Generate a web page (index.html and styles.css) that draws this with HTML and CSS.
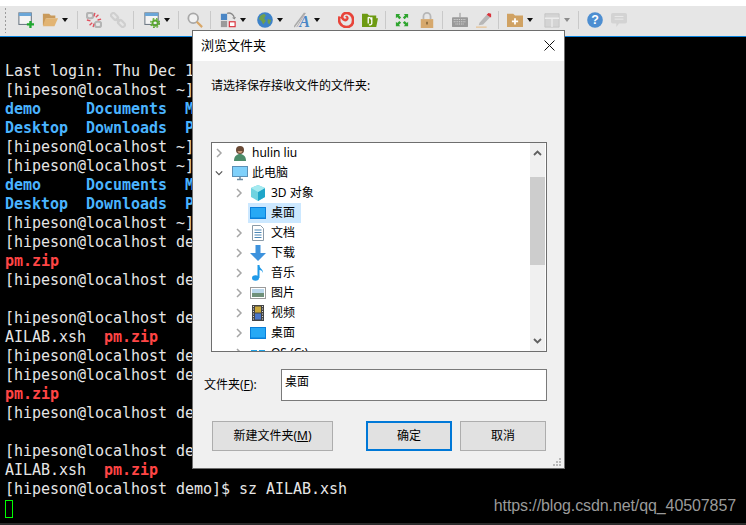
FILE: index.html
```html
<!DOCTYPE html>
<html lang="zh-CN">
<head>
<meta charset="utf-8">
<title>浏览文件夹</title>
<link rel="stylesheet" href="styles.css">
</head>
<body>
<div class="app">
  <div class="topgap"></div>
  <div class="toolbar">
    <div class="grip"></div>
    <div class="btn drop"><svg class="ic" viewBox="0 0 18 18"><rect x="1" y="1" width="14" height="13" fill="#f4f4f4" stroke="#6f7a86" stroke-width="1.200"/><rect x="1" y="1" width="14" height="3.500" fill="#6aa6d8"/><path d="M10 14h8M14 10v8" stroke="#1fa82f" stroke-width="2.600"/></svg></div>
    <div class="btn drop-arrow"><svg class="ic" viewBox="0 0 18 18"><path d="M1 2h7l2 2h5v3H5L2 15H1z" fill="#c99a5b"/><path d="M4 7h14l-4 9H1z" fill="#e2b473"/></svg><i class="caret"></i></div>
    <span class="sep sep-snug"></span>
    <div class="btn"><svg class="ic" viewBox="0 0 18 18"><g fill="none" stroke="#b4b4b4" stroke-width="2.400"><rect x="1" y="1" width="7" height="6" rx="2.400"/><rect x="10" y="11" width="7" height="6" rx="2.400"/></g><path d="M10 1l-1 4M14 3l-3 3M17 8l-4 1M1 9l4 1M4 15l3-3M8 17l1-4" stroke="#e0525f" stroke-width="1.500"/></svg></div>
    <div class="btn"><svg class="ic" viewBox="0 0 18 18"><g fill="none" stroke="#cfcfcf" stroke-width="2.400" transform="rotate(45 9 9)"><rect x="-1" y="6.500" width="9" height="5" rx="2.500"/><rect x="10" y="6.500" width="9" height="5" rx="2.500"/><path d="M6 9h6"/></g></svg></div>
    <span class="sep sep-wide"></span>
    <div class="btn drop-arrow"><svg class="ic" viewBox="0 0 18 18"><rect x="1" y="1" width="15" height="13" fill="#f4f4f4" stroke="#6f7a86" stroke-width="1.200"/><rect x="1" y="1" width="15" height="3.500" fill="#6aa6d8"/><circle cx="12.500" cy="12.500" r="3" fill="none" stroke="#5ba82f" stroke-width="2.200"/><circle cx="12.500" cy="12.500" r="5" fill="none" stroke="#5ba82f" stroke-width="1.500" stroke-dasharray="2 2"/></svg><i class="caret"></i></div>
    <span class="sep sep-tight"></span>
    <div class="btn"><svg class="ic" viewBox="0 0 18 18"><circle cx="7" cy="7" r="5.500" fill="#f2f2f2" stroke="#a8a8a8" stroke-width="2"/><path d="M11 11l6 6" stroke="#d9a768" stroke-width="2.500"/></svg></div>
    <span class="sep"></span>
    <div class="btn drop-arrow"><svg class="ic" viewBox="0 0 18 18"><rect x="1" y="2" width="7" height="7" fill="#4a86c5"/><rect x="1" y="10" width="7" height="7" fill="#9a9a9a"/><rect x="10.500" y="11" width="6.500" height="5.500" fill="#fff" stroke="#d9313a" stroke-width="1.300"/><path d="M8 1.500a6 6 0 0 1 8 5" fill="none" stroke="#8a8a8a" stroke-width="1.500"/><path d="M13.500 6.500l3 2 1.500-3z" fill="#8a8a8a"/></svg><i class="caret"></i></div>
    <div class="btn drop-arrow push"><svg class="ic" viewBox="0 0 18 18"><circle cx="9" cy="9" r="8.800" fill="#3d82c9"/><path d="M4 4l4-2 2 2-2 3 2 3-3 4-2-4-3-2zM12 8l4 1-2 5-2-2z" fill="#6f9f4d"/></svg><i class="caret"></i></div>
    <div class="btn drop-arrow push"><svg class="ic" viewBox="0 0 18 18"><path d="M0 17L12 1" stroke="#a9a9a9" stroke-width="1.800"/><path d="M3 17L13 1" stroke="#a9a9a9" stroke-width="1"/><text class="ic-a" x="6" y="17">A</text></svg><i class="caret"></i></div>
    <div class="btn push-lg"><svg class="ic" viewBox="0 0 18 18"><path d="M2 5c-2 5 0 11 7 12 5 0 8-3 8-8 0-5-4-8-7-8-4 0-6 3-5 6 1 2 4 3 5 1 1-1 0-3-1-2" fill="none" stroke="#e8443a" stroke-width="3"/></svg></div>
    <div class="btn"><svg class="ic" viewBox="0 0 18 18"><path d="M0 2h6l2 2h8v3h2l-2 10H0z" fill="#6d9a12"/><path d="M7 6v7M7 6c3 0 4 2 3 3M11 6v7c0 1-2 2-3 1" fill="none" stroke="#fff" stroke-width="1.500"/></svg></div>
    <span class="sep"></span>
    <div class="btn"><svg class="ic ic-small" viewBox="0 0 16 16"><g fill="#2fa52f"><path d="M1 1h5L4.500 2.500 7 5 5 7 2.500 4.500 1 6zM15 1v5l-1.500-1.500L11 7 9 5l2.500-2.500L10 1zM1 15v-5l1.500 1.500L5 9l2 2-2.500 2.500L6 15zM15 15h-5l1.500-1.500L9 11l2-2 2.500 2.500L15 10z"/></g></svg></div>
    <div class="btn"><svg class="ic" viewBox="0 0 18 18"><path d="M5 8V5a4 4 0 0 1 8 0v3" fill="none" stroke="#b7b7b7" stroke-width="2"/><rect x="2" y="8" width="14" height="10" fill="#d6a86c"/><rect x="8" y="11" width="2" height="3" fill="#8a6a3c"/></svg></div>
    <span class="sep"></span>
    <div class="btn"><svg class="ic" viewBox="0 0 18 18"><path d="M9 1v5" stroke="#8a8a8a"/><rect x="0" y="6" width="18" height="11" rx="1" fill="#999"/><path d="M2 8.500h14M2 11h14M4 13.500h10" stroke="#e6e6e6" stroke-width="1" stroke-dasharray="1 1"/></svg></div>
    <div class="btn"><svg class="ic" viewBox="0 0 18 18"><path d="M0 17h12" stroke="#e8bd85" stroke-width="1.200"/><path d="M4 12L12 3l4 3-8 8-5 1z" fill="#b7b7b7"/><path d="M12 3l2-2 3 1 0 4-1 0z" fill="#d9313a"/></svg></div>
    <span class="sep sep-tight"></span>
    <div class="btn drop-arrow"><svg class="ic" viewBox="0 0 18 18"><path d="M0 2h7l2 2h9v13H0z" fill="#d0a263"/><path d="M9 7v7M5.500 10.500h7" stroke="#fff" stroke-width="2"/></svg><i class="caret"></i></div>
    <div class="btn drop-arrow push"><svg class="ic" viewBox="0 0 18 18"><path d="M1 2h16v15H1z" fill="#d4d4d4" stroke="#c4c4c4"/><path d="M1 7h16M9 7v10" stroke="#ececec" stroke-width="1.500"/></svg><i class="caret caret-off"></i></div>
    <span class="sep sep-tight"></span>
    <div class="btn"><svg class="ic" viewBox="0 0 18 18"><circle cx="9" cy="9" r="8.800" fill="#4d8ed1"/><text class="ic-q" x="9" y="14">?</text></svg></div>
    <div class="btn"><svg class="ic" viewBox="0 0 18 18"><path d="M2 1h14a2 2 0 0 1 2 2v8a2 2 0 0 1-2 2H9l-3 4v-4H2a2 2 0 0 1-2-2V3a2 2 0 0 1 2-2z" fill="#d3d3d3"/><path d="M4 5h10M4 8h10" stroke="#ececec"/></svg></div>
  </div>
  <div class="accent"></div>
  <pre class="terminal">Last login: Thu Dec 1
[hipeson@localhost ~]
<b class="dir">demo     Documents  M</b>
<b class="dir">Desktop  Downloads  P</b>
[hipeson@localhost ~]
[hipeson@localhost ~]
<b class="dir">demo     Documents  M</b>
<b class="dir">Desktop  Downloads  P</b>
[hipeson@localhost ~]
[hipeson@localhost de
<b class="zip">pm.zip</b>
[hipeson@localhost de

[hipeson@localhost de
AILAB.xsh  <b class="zip">pm.zip</b>
[hipeson@localhost de
[hipeson@localhost de
<b class="zip">pm.zip</b>
[hipeson@localhost de

[hipeson@localhost de
AILAB.xsh  <b class="zip">pm.zip</b>
[hipeson@localhost demo]$ sz AILAB.xsh
<span class="cursor"></span></pre>
  <div class="watermark">https://blog.csdn.net/qq_40507857</div>

  <section class="dialog">
    <header class="titlebar">
      <span>浏览文件夹</span>
      <svg class="close" viewBox="0 0 11 11"><path d="M.5.5l10 10M10.500.5l-10 10" stroke="#111" stroke-width="1"/></svg>
    </header>
    <div class="content">
      <p class="prompt">请选择保存接收文件的文件夹:</p>
      <div class="tree">
        <ul class="rows">
          <li class="row"><svg class="chev" viewBox="0 0 8 10"><path d="M2 1l4 4-4 4" fill="none" stroke="#a6a6a6" stroke-width="1.500"/></svg><svg class="ti" viewBox="0 0 16 16"><circle cx="8" cy="5" r="4" fill="#6a4a36"/><path d="M5.500 6c1 3 4 3 5 0z" fill="#c79a7a"/><path d="M2 16c0-5 3-7 6-7s6 2 6 7z" fill="#4c8c6a"/></svg><span>hulin liu</span></li>
          <li class="row"><svg class="chev" viewBox="0 0 10 8"><path d="M1 2l4 4 4-4" fill="none" stroke="#555" stroke-width="1.500"/></svg><svg class="ti" viewBox="0 0 16 16"><rect x=".5" y="1.500" width="15" height="10" fill="#7fd0fa" stroke="#5b8fb5"/><path d="M5 14.500h6M8 11.500v3" stroke="#6c8aa0" stroke-width="1.500"/></svg><span>此电脑</span></li>
          <li class="row child"><svg class="chev" viewBox="0 0 8 10"><path d="M2 1l4 4-4 4" fill="none" stroke="#a6a6a6" stroke-width="1.500"/></svg><svg class="ti" viewBox="0 0 16 16"><path d="M8 0l7 3v9l-7 4-7-4V3z" fill="#6fd3e0"/><path d="M8 7l7-4v9l-7 4z" fill="#1fa6c9"/><path d="M8 7L1 3l7-3 7 3z" fill="#a5eaf0"/></svg><span>3D 对象</span></li>
          <li class="row child selected"><span class="chev-space"></span><svg class="ti" viewBox="0 0 16 16"><rect x="0" y="2" width="16" height="12" fill="#0a7fd9"/><rect x="1" y="3" width="14" height="9.500" fill="#27a9f5"/></svg><span>桌面</span></li>
          <li class="row child"><svg class="chev" viewBox="0 0 8 10"><path d="M2 1l4 4-4 4" fill="none" stroke="#a6a6a6" stroke-width="1.500"/></svg><svg class="ti" viewBox="0 0 16 16"><path d="M2.500.500h8l3 3v12h-11z" fill="#fff" stroke="#8a9aa8"/><path d="M4.500 5h7M4.500 7.500h7M4.500 10h7M4.500 12.500h7" stroke="#4b86b5"/></svg><span>文档</span></li>
          <li class="row child"><svg class="chev" viewBox="0 0 8 10"><path d="M2 1l4 4-4 4" fill="none" stroke="#a6a6a6" stroke-width="1.500"/></svg><svg class="ti" viewBox="0 0 16 16"><path d="M5.500 0h5v8H16l-8 8-8-8h5.500z" fill="#3d92dd"/></svg><span>下载</span></li>
          <li class="row child"><svg class="chev" viewBox="0 0 8 10"><path d="M2 1l4 4-4 4" fill="none" stroke="#a6a6a6" stroke-width="1.500"/></svg><svg class="ti" viewBox="0 0 16 16"><ellipse cx="5.500" cy="13" rx="3.500" ry="2.800" fill="#1f9ae8"/><path d="M7.500 0h2c0 4 4 4 3.500 8-.5-2-2-3-3.500-3v8h-2z" fill="#1f9ae8"/></svg><span>音乐</span></li>
          <li class="row child"><svg class="chev" viewBox="0 0 8 10"><path d="M2 1l4 4-4 4" fill="none" stroke="#a6a6a6" stroke-width="1.500"/></svg><svg class="ti" viewBox="0 0 16 16"><rect x=".5" y="2.500" width="15" height="11" fill="#fff" stroke="#9a9a9a"/><rect x="2" y="4" width="12" height="4" fill="#b9d6ea"/><rect x="2" y="8" width="12" height="4" fill="#6f9079"/></svg><span>图片</span></li>
          <li class="row child"><svg class="chev" viewBox="0 0 8 10"><path d="M2 1l4 4-4 4" fill="none" stroke="#a6a6a6" stroke-width="1.500"/></svg><svg class="ti" viewBox="0 0 16 16"><rect x="2" y="0" width="12" height="16" fill="#444"/><rect x="5" y="1.500" width="6" height="6" fill="#c9a83c"/><rect x="5" y="8.500" width="6" height="6" fill="#4a76c9"/><path d="M3.500 1v14M12.500 1v14" stroke="#ddd" stroke-dasharray="1 1.500"/></svg><span>视频</span></li>
          <li class="row child"><svg class="chev" viewBox="0 0 8 10"><path d="M2 1l4 4-4 4" fill="none" stroke="#a6a6a6" stroke-width="1.500"/></svg><svg class="ti" viewBox="0 0 16 16"><rect x="0" y="2" width="16" height="12" fill="#0a7fd9"/><rect x="1" y="3" width="14" height="9.500" fill="#27a9f5"/></svg><span>桌面</span></li>
          <li class="row child"><svg class="chev" viewBox="0 0 8 10"><path d="M2 1l4 4-4 4" fill="none" stroke="#a6a6a6" stroke-width="1.500"/></svg><svg class="ti" viewBox="0 0 16 16"><path d="M1 5h6v6H1zM9 5h6v6H9z" fill="#1fa3e8"/></svg><span>OS (C:)</span></li>
        </ul>
        <div class="scrollbar">
          <svg class="arrow" viewBox="0 0 9 6"><path d="M1 5l3.500-3.500L8 5" fill="none" stroke="#606060" stroke-width="1.800"/></svg>
          <div class="track"><div class="thumb"></div></div>
          <svg class="arrow" viewBox="0 0 9 6"><path d="M1 1l3.500 3.500L8 1" fill="none" stroke="#606060" stroke-width="1.800"/></svg>
        </div>
      </div>
      <div class="field">
        <label class="field-label">文件夹(<u>F</u>):</label>
        <div class="input">桌面</div>
      </div>
      <div class="actions">
        <button class="action">新建文件夹(<u>M</u>)</button>
        <div class="action-right">
          <button class="action primary">确定</button>
          <button class="action secondary">取消</button>
        </div>
      </div>
    </div>
    <svg class="resize" viewBox="0 0 9 9"><path d="M6 0h2v2H6zM3 3h2v2H3zM6 3h2v2H6zM0 6h2v2H0zM3 6h2v2H3zM6 6h2v2H6z" fill="#b9b9b9"/></svg>
  </section>
</div>
</body>
</html>
```
FILE: styles.css
```css
* { box-sizing: border-box; }
html, body { margin: 0; padding: 0; }
body { width: 746px; height: 525px; overflow: hidden; background: #000; }
.app { position: relative; width: 746px; height: 525px; display: flex; flex-direction: column; overflow: hidden; border-bottom: 2px solid #2b2b2b; background: #000; }
.topgap { height: 6px; background: #fff; flex: none; }
.toolbar { height: 30px; flex: none; background: #e6e6e6; display: flex; align-items: center; padding: 0 0 3px 4px; }
.grip { width: 3px; height: 26px; margin-right: 7px; background-image: radial-gradient(circle, #9c9c9c 1px, transparent 1px); background-size: 3px 4px; }
.btn { flex: none; width: 24px; height: 16px; display: flex; align-items: center; padding-left: 4px; }
.btn.drop-arrow { width: 36px; }
.btn.push { margin-left: 1px; }
.btn.push-lg { margin-left: 8px; }
.ic { width: 16px; height: 16px; flex: none; display: block; }
.ic-small { width: 14px; height: 14px; }
.ic-a { font: italic bold 18px "Liberation Serif", serif; fill: #4a86c5; }
.ic-q { font: bold 14px "Liberation Sans", sans-serif; fill: #fff; text-anchor: middle; }
.caret { width: 0; height: 0; margin-left: 4px; border-left: 3.500px solid transparent; border-right: 3.500px solid transparent; border-top: 4px solid #111; }
.caret-off { border-top-color: #8c8c8c; }
.sep { flex: none; width: 1px; height: 18px; background: #c9c9c9; margin: 0 5px 0 3px; }
.sep-snug { margin-right: 4px; }
.sep-wide { margin-right: 6px; }
.sep-tight { margin: 0 4px 0 2px; }
.accent { height: 1px; flex: none; background: #0a84e0; }
.terminal { flex: 1; margin: 0; padding: 25px 0 0 5px; color: #e6e6e6; font: 15px/19px "DejaVu Sans Mono", monospace; letter-spacing: -0.03px; white-space: pre; overflow: hidden; background: #000; }
.dir { color: #4ab4ff; }
.zip { color: #ff4545; }
.cursor { display: inline-block; width: 8px; height: 18px; border: 1px solid #00ff00; vertical-align: -5px; }
.watermark { position: absolute; right: 10px; top: 496px; font: 16px/20px "Liberation Sans", sans-serif; letter-spacing: -0.1px; color: #9a9a9a; }
.dialog { position: absolute; left: 192px; top: 30px; width: 373px; height: 439px; background: #f0f0f0; border: 1px solid #6e6e6e; display: flex; flex-direction: column; font: 12px/18px "Noto Sans", "Noto Sans CJK SC", sans-serif; color: #000; }
.titlebar { height: 30px; flex: none; background: #fff; display: flex; align-items: center; justify-content: space-between; padding: 0 9px 2px 8px; font-size: 13px; }
.close { width: 11px; height: 11px; display: block; }
.content { flex: 1; display: flex; flex-direction: column; padding: 16px 17px 0 18px; }
.prompt { margin: 0 0 47px; height: 18px; line-height: 18px; }
.tree { height: 210px; flex: none; display: flex; border: 1px solid #6e6e6e; background: #fff; overflow: hidden; }
.rows { flex: 1; margin: 0; padding: 0; list-style: none; overflow: hidden; }
.row { height: 20px; display: flex; align-items: center; padding-left: 3px; white-space: nowrap; }
.row .chev { width: 8px; height: 10px; flex: none; margin-right: 9px; }
.row.child { padding-left: 23px; }
.row.child .chev { margin-right: 7px; }
.chev-space { width: 8px; flex: none; margin-right: 7px; }
.ti { width: 16px; height: 16px; flex: none; margin-right: 5px; }
.row:not(.child) .ti { margin-right: 4px; }
.selected { background: linear-gradient(to right, transparent 36px, #cce8ff 36px, #cce8ff 89px, transparent 89px); }
.scrollbar { flex: none; width: 15px; margin-right: 1px; background: #f0f0f0; display: flex; flex-direction: column; }
.arrow { width: 9px; height: 6px; margin: 7px 3px; flex: none; }
.track { flex: 1; }
.thumb { height: 88px; background: #cdcdcd; margin-top: 14px; }
.field { display: flex; align-items: center; margin: 17px 0 0 -7px; gap: 17px; }
.field-label { width: 60px; white-space: nowrap; }
.input { flex: 1; height: 32px; border: 1px solid #7a7a7a; background: #fff; padding: 3px 3px; }
.actions { display: flex; justify-content: space-between; margin: 20px 0 0 1px; padding-right: 1px; }
.action-right { display: flex; gap: 8px; }
button { font: inherit; color: #000; }
.action { height: 30px; width: 121px; padding: 0; background: #e1e1e1; border: 1px solid #adadad; }
.primary { width: 86px; border: 2px solid #0078d7; }
.secondary { width: 86px; }
.resize { position: absolute; right: 2px; bottom: 1px; width: 9px; height: 9px; }
```
